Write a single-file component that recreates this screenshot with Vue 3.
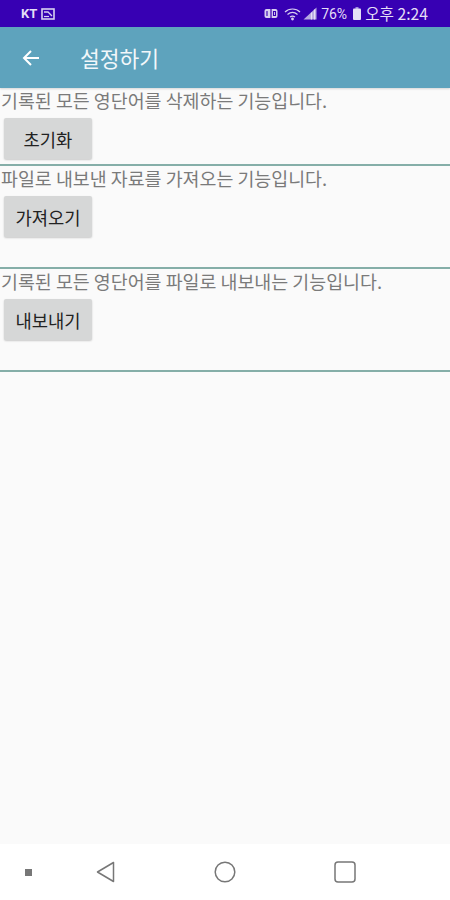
<template>
  <div class="screen">
    <!-- Status bar -->
    <div class="status-bar">
      <div class="status-left">
        <span class="carrier">KT</span>
        <svg class="msg-icon" width="14" height="12" viewBox="0 0 14 12">
          <rect x="1" y="1" width="12" height="10" fill="none" stroke="#d8d0f0" stroke-width="1.6" />
          <path d="M3 4H7L11 8" fill="none" stroke="#d8d0f0" stroke-width="1.3" />
          <path d="M3 8.5H8" fill="none" stroke="#d8d0f0" stroke-width="1.2" />
        </svg>
      </div>
      <div class="status-right">
        <svg width="14" height="12" viewBox="0 0 14 12">
          <rect x="0.5" y="1" width="13" height="9" rx="2" fill="#d8d0f0" />
          <rect x="6.4" y="1" width="1.2" height="9" fill="#3700b3" />
          <path d="M3 3V8M9.5 3.5H11.5V7.5H9.5Z" fill="none" stroke="#3700b3" stroke-width="1.1" />
        </svg>
        <svg class="wifi" width="17" height="14" viewBox="0 0 17 14">
          <path d="M1 5C5 1 12 1 16 5M3.5 7.5C6.5 5 10.5 5 13.5 7.5M6 10C7.5 9 9.5 9 11 10" fill="none" stroke="#d8d0f0" stroke-width="1.2" />
          <circle cx="8.5" cy="12" r="1.4" fill="#d8d0f0" />
        </svg>
        <svg class="signal" width="14" height="13" viewBox="0 0 14 13">
          <path d="M0.5 12.5L13.5 0.5V12.5Z" fill="#b6a8e2" />
          <path d="M8.5 5.5V12.5M11.5 2.5V12.5" stroke="#e4def6" stroke-width="1.2" />
        </svg>
        <span class="percent">76%</span>
        <svg class="battery" width="8" height="13" viewBox="0 0 8 13">
          <rect x="2.5" y="0" width="3" height="2" fill="#9d8bdb" />
          <rect x="0" y="1.5" width="8" height="11.5" rx="1" fill="#e4def6" />
        </svg>
        <span class="clock">오후 2:24</span>
      </div>
    </div>

    <!-- App bar -->
    <header class="app-bar">
      <svg class="back" width="20" height="20" viewBox="0 0 20 20">
        <path d="M18 10H3M10 3L3 10L10 17" fill="none" stroke="#fff" stroke-width="2" />
      </svg>
      <h1>설정하기</h1>
    </header>

    <!-- Settings sections -->
    <main class="content">
      <section v-for="item in sections" :key="item.label" class="section" :class="item.size">
        <p>{{ item.text }}</p>
        <button type="button">{{ item.label }}</button>
      </section>
    </main>

    <!-- Navigation bar -->
    <nav class="nav-bar">
      <span class="dot"></span>
      <svg class="nav-back" width="20" height="22" viewBox="0 0 20 22">
        <path d="M17.5 1.5V20.5L1.5 11Z" fill="none" stroke="#777" stroke-width="1.5" stroke-linejoin="round" />
      </svg>
      <svg width="22" height="22" viewBox="0 0 22 22">
        <circle cx="11" cy="11" r="9.8" fill="none" stroke="#777" stroke-width="1.5" />
      </svg>
      <svg width="22" height="22" viewBox="0 0 22 22">
        <rect x="1" y="1" width="20" height="20" rx="3" fill="none" stroke="#777" stroke-width="1.5" />
      </svg>
    </nav>
  </div>
</template>

<script setup>
const sections = [
  { text: '기록된 모든 영단어를 삭제하는 기능입니다.', label: '초기화', size: 'short' },
  { text: '파일로 내보낸 자료를 가져오는 기능입니다.', label: '가져오기', size: 'tall' },
  { text: '기록된 모든 영단어를 파일로 내보내는 기능입니다.', label: '내보내기', size: 'tall' },
];
</script>

<style>
html,
body {
  margin: 0;
  background: #fafafa;
}
</style>

<style scoped>
.screen {
  width: 450px;
  height: 900px;
  display: flex;
  flex-direction: column;
  overflow: hidden;
  background: #fafafa;
  font-family: "Noto Sans CJK KR", "Noto Sans", sans-serif;
}

.status-bar {
  height: 27px;
  flex: none;
  display: flex;
  align-items: center;
  justify-content: space-between;
  padding: 0 22px 0 21px;
  background: #3700b3;
  color: #e4def6;
}

.status-left,
.status-right {
  display: flex;
  align-items: center;
}

.carrier {
  margin-right: 4px;
  font: 700 13px "Roboto", sans-serif;
}

.wifi {
  margin-left: 6px;
}

.signal {
  margin-left: 2px;
}

.percent {
  margin-left: 4px;
  font: 14px "Roboto", sans-serif;
}

.battery {
  margin-left: 6px;
}

.clock {
  margin-left: 4px;
  font-size: 15.7px;
}

.app-bar {
  height: 61px;
  flex: none;
  display: flex;
  align-items: center;
  padding-left: 21px;
  background: #5ea3bd;
  box-shadow: 0 1px 2px rgba(0, 0, 0, 0.15);
}

.app-bar h1 {
  margin: 0 0 0 39px;
  color: #f2f7fa;
  font-size: 21.5px;
  font-weight: 400;
}

.content {
  flex: 1;
}

.section {
  box-sizing: border-box;
  border-bottom: 2px solid #85aea8;
}

.section.short {
  height: 78px;
}

.section.tall {
  height: 103px;
}

.section p {
  margin: 0;
  height: 30px;
  padding-left: 1px;
  color: #7a7a7a;
  font-size: 18.4px;
  line-height: 24px;
  white-space: nowrap;
}

.section button {
  display: block;
  width: 88px;
  height: 41px;
  margin-left: 4px;
  padding: 0;
  border: none;
  border-radius: 2px;
  background: #d6d7d7;
  color: #222;
  font-family: inherit;
  font-size: 17.7px;
  box-shadow: 0 1px 2px rgba(0, 0, 0, 0.2);
}

.nav-bar {
  height: 56px;
  flex: none;
  display: flex;
  align-items: center;
  gap: 98px;
  padding-left: 25px;
  background: #fff;
}

.nav-back {
  margin-left: -34px;
}

.dot {
  width: 7px;
  height: 7px;
  background: #777;
}
</style>
